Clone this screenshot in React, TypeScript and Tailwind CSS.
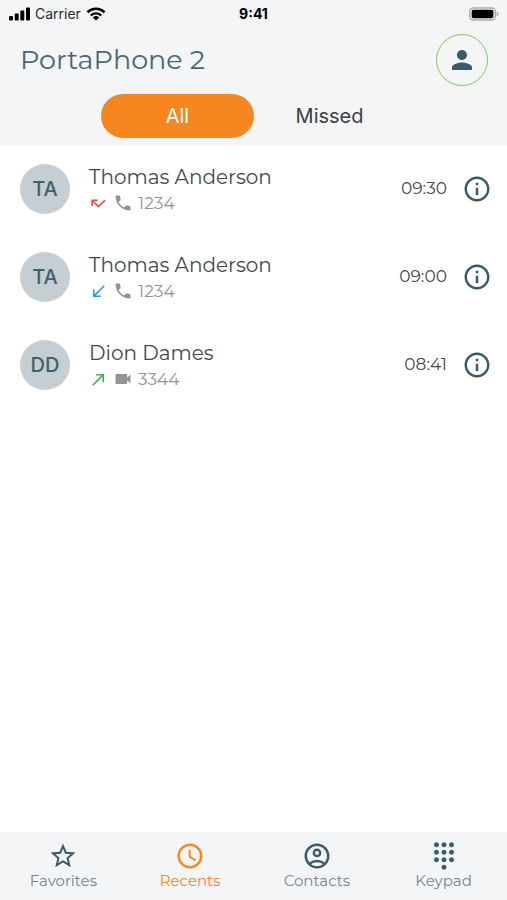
import {
    MdAccessTime,
    MdCallMade,
    MdCallMissed,
    MdCallReceived,
    MdDialpad,
    MdInfoOutline,
    MdOutlineAccountCircle,
    MdPerson,
    MdPhone,
    MdStarOutline,
    MdVideocam,
} from "react-icons/md";

const calls = [
    { initials: "TA", name: "Thomas Anderson", number: "1234", time: "09:30", direction: "missed", video: false },
    { initials: "TA", name: "Thomas Anderson", number: "1234", time: "09:00", direction: "incoming", video: false },
    { initials: "DD", name: "Dion Dames", number: "3344", time: "08:41", direction: "outgoing", video: true },
];

const tabs = [
    { label: "Favorites", Icon: MdStarOutline },
    { label: "Recents", Icon: MdAccessTime, active: true },
    { label: "Contacts", Icon: MdOutlineAccountCircle },
    { label: "Keypad", Icon: MdDialpad },
];

function StatusBar() {
    return (
        <div className="grid h-7 grid-cols-3 items-center px-2 font-['Inter',sans-serif] text-black">
            <div className="flex items-center gap-[5px]">
                <svg width="22" height="14" viewBox="0 0 22 14" fill="currentColor" aria-hidden="true">
                    <rect x="1" y="9" width="4" height="4.5" rx="1" />
                    <rect x="6.7" y="6.5" width="4" height="7" rx="1" />
                    <rect x="12.3" y="3.5" width="4" height="10" rx="1" />
                    <rect x="18" y="0.5" width="4" height="13" rx="1" />
                </svg>
                <span className="text-sm text-[#2b2c2e]">Carrier</span>
                <svg width="20" height="14" viewBox="0 0 20 14" fill="none" stroke="currentColor" aria-hidden="true">
                    <path d="M1.5 5.2a12.2 12.2 0 0 1 17 0" strokeWidth="2.6" />
                    <path d="M4.7 8.5a7.6 7.6 0 0 1 10.6 0" strokeWidth="2.4" />
                    <path d="M10 13.5 6.9 10.5a4.5 4.5 0 0 1 6.2 0z" fill="currentColor" stroke="none" />
                </svg>
            </div>
            <span className="text-center text-sm font-bold">9:41</span>
            <svg className="justify-self-end" width="30" height="14" viewBox="0 0 31 14" aria-hidden="true">
                <rect x="0.8" y="0.8" width="26.4" height="12.4" rx="3.6" fill="#f3f5f7" stroke="#aaacae" strokeWidth="1.5" />
                <rect x="2.8" y="2.5" width="22.4" height="9" rx="1.8" fill="#000" />
                <path d="M28.6 4.6c1.4.4 2 1.3 2 2.4s-.6 2-2 2.4z" fill="#aaacae" />
            </svg>
        </div>
    );
}

function DirectionIcon({ direction }: { direction: string }) {
    if (direction === "missed") return <MdCallMissed size={19} className="text-[#ee4a48]" title="Missed" />;
    if (direction === "incoming") return <MdCallReceived size={19} className="text-[#2a97ec]" title="Incoming" />;
    return <MdCallMade size={19} className="text-[#43ae4b]" title="Outgoing" />;
}

export default function App() {
    return (
        <div className="flex min-h-screen flex-col bg-white font-['Montserrat','Inter',sans-serif] text-[#46484b]">
            <header className="bg-[#f3f5f7] pb-[7px]">
                <StatusBar />
                <div className="flex h-[66px] items-start justify-between pt-1.5 pr-[19px] pl-5">
                    <h1 className="text-[27px] leading-[52px] text-[#4d6772]">PortaPhone 2</h1>
                    <button
                        type="button"
                        aria-label="Account"
                        className="flex size-[52px] items-center justify-center rounded-full border border-[#83c65f] text-[#3b5b69]"
                    >
                        <MdPerson size={30} />
                    </button>
                </div>
                <div className="mx-auto flex w-3/5 font-['Inter',sans-serif] text-xl">
                    <button type="button" className="h-11 flex-1 rounded-full bg-[#f58620] text-white">
                        All
                    </button>
                    <button type="button" className="h-11 flex-1 rounded-full text-[#3c3e42]">
                        Missed
                    </button>
                </div>
            </header>

            <main className="flex-1">
                <ul>
                    {calls.map((call) => (
                        <li key={call.time} className="flex h-22 items-center pr-[15px] pl-5">
                            <div className="flex size-[50px] items-center justify-center rounded-full bg-[#c5ced2] font-['Inter',sans-serif] text-xl font-medium text-[#43606c]">
                                {call.initials}
                            </div>
                            <div className="ml-[19px] flex-1">
                                <p className="text-xl leading-7">{call.name}</p>
                                <div className="flex items-center gap-[5px] text-[17px] leading-6 text-[#939393]">
                                    <DirectionIcon direction={call.direction} />
                                    {call.video ? <MdVideocam size={20} /> : <MdPhone size={20} />}
                                    <span>{call.number}</span>
                                </div>
                            </div>
                            <time className="mr-[15px] text-[17px]">{call.time}</time>
                            <button type="button" aria-label={`Details for ${call.name}`} className="text-[#3b5b69]">
                                <MdInfoOutline size={30} />
                            </button>
                        </li>
                    ))}
                </ul>
            </main>

            <nav className="grid h-[68px] grid-cols-4 bg-[#f3f5f7] pt-[9px]">
                {tabs.map(({ label, Icon, active }) => (
                    <a
                        key={label}
                        href="#"
                        aria-current={active ? "page" : undefined}
                        className={active ? "flex flex-col items-center text-[#f58620]" : "flex flex-col items-center text-[#3b5b69]"}
                    >
                        <Icon size={30} />
                        <span className={active ? "text-[15px] leading-5" : "text-[15px] leading-5 text-[#76858c]"}>{label}</span>
                    </a>
                ))}
            </nav>
        </div>
    );
}
